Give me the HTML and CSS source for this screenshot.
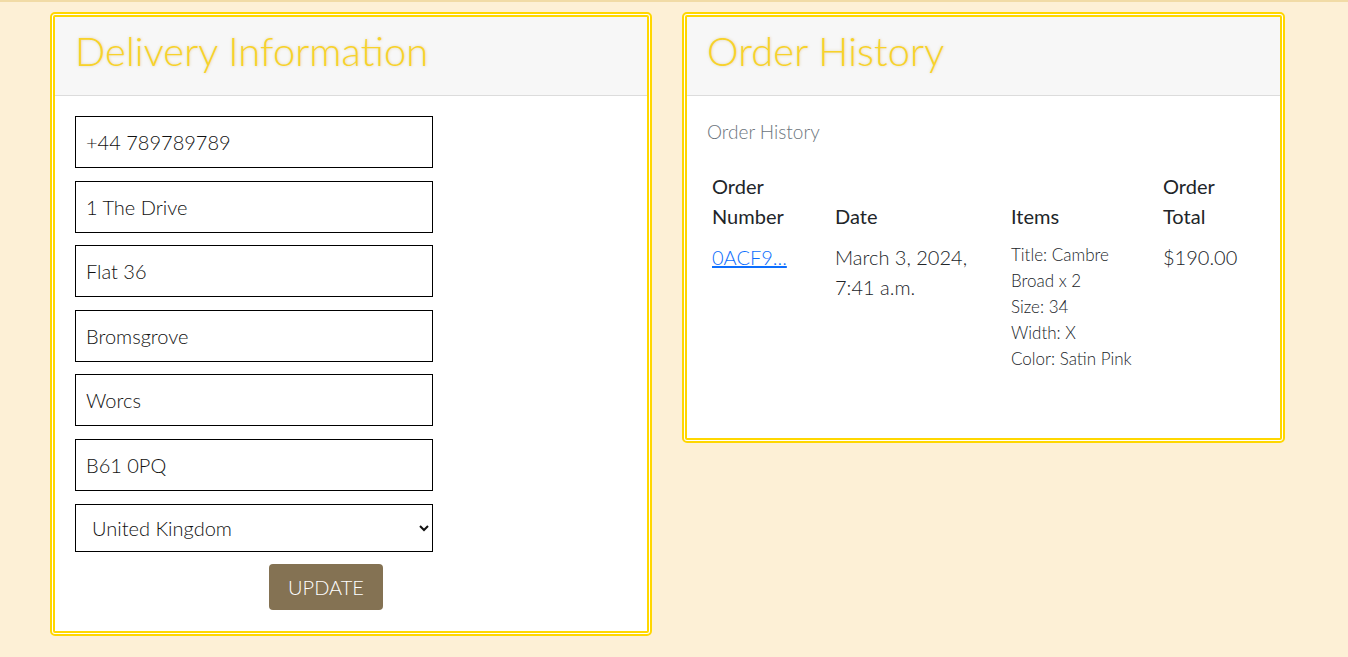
FILE: index.html
```html
<!DOCTYPE html>
<html lang="en">
<head>
<meta charset="utf-8">
<title>Profile</title>
<link rel="stylesheet" href="styles.css">
</head>
<body>
<div class="topbar"></div>
<main class="page">
  <section class="card card-left">
    <header class="card-header"><h2 class="card-title">Delivery Information</h2></header>
    <div class="card-body">
      <form class="form">
        <input class="field" type="text" value="+44 789789789">
        <input class="field" type="text" value="1 The Drive">
        <input class="field" type="text" value="Flat 36">
        <input class="field" type="text" value="Bromsgrove">
        <input class="field" type="text" value="Worcs">
        <input class="field" type="text" value="B61 0PQ">
        <select class="field select">
          <option>United Kingdom</option>
        </select>
        <div class="btn-row"><button type="button" class="btn">UPDATE</button></div>
      </form>
    </div>
  </section>
  <section class="card card-right">
    <header class="card-header"><h2 class="card-title">Order History</h2></header>
    <div class="card-body">
      <p class="muted">Order History</p>
      <table class="orders">
        <thead>
          <tr>
            <th class="c1">Order Number</th>
            <th class="c2">Date</th>
            <th class="c3">Items</th>
            <th class="c4">Order Total</th>
          </tr>
        </thead>
        <tbody>
          <tr>
            <td><a href="#" class="link">0ACF9...</a></td>
            <td>March 3, 2024, 7:41 a.m.</td>
            <td class="items">
              <div>Title: Cambre Broad x 2</div>
              <div>Size: 34</div>
              <div>Width: X</div>
              <div>Color: Satin Pink</div>
            </td>
            <td>$190.00</td>
          </tr>
        </tbody>
      </table>
    </div>
  </section>
</main>
</body>
</html>
```
FILE: styles.css
```css
html, body {
  margin: 0;
  padding: 0;
}
body {
  background: #fdf0d6;
  font-family: "Lato Light", Lato, "Open Sans", sans-serif;
  font-weight: 300;
  color: #212529;
  height: 657px;
  overflow: hidden;
}
.topbar {
  height: 2px;
  background: #f1dba6;
}
.page {
  display: flex;
  align-items: flex-start;
  gap: 30px;
  padding: 10px 0 0 50px;
}
.card {
  background: #fff;
  border: 5px double #ffd700;
  border-radius: 5px;
  box-sizing: border-box;
}
.card-left { width: 602px; }
.card-right { width: 603px; }
.card-header {
  background: #f7f7f7;
  border-bottom: 1px solid #dcdcdc;
  height: 79px;
  box-sizing: border-box;
  padding: 0 20px;
  display: flex;
  align-items: center;
}
.card-title {
  margin: 0;
  font-family: "Lato Light", Lato, sans-serif;
  font-size: 40px;
  font-weight: 300;
  color: #f8d22a;
  text-shadow: 0 0 3px rgba(180, 140, 0, 0.3);
  line-height: 1;
  padding-bottom: 10px;
}
.card-body {
  padding: 20px 20px 21px 20px;
}
.form {
  width: 502px;
  display: flex;
  flex-direction: column;
  gap: 12.6px;
}
.field {
  width: 358px;
  height: 52px;
  box-sizing: border-box;
  border: 1px solid #000;
  border-radius: 0;
  padding: 0 10px;
  font-family: "Lato Light", Lato, sans-serif;
  font-weight: 300;
  font-size: 20px;
  color: #111;
  background: #fff;
  outline: none;
}
.select {
  height: 48px;
  padding-left: 12px;
  padding-right: 8px;
}
.btn-row {
  display: flex;
  justify-content: center;
}
.btn {
  width: 114px;
  height: 46px;
  background: #847253;
  color: #ffffff;
  border: none;
  border-radius: 4px;
  font-family: "Lato Light", Lato, sans-serif;
  font-weight: 300;
  font-size: 20px;
}
.muted {
  margin: 4px 0 27px 0;
  color: #6c757d;
  font-size: 19px;
  font-weight: 300;
  line-height: 24px;
}
.orders {
  border-collapse: collapse;
  width: 552px;
  margin-bottom: 45px;
}
.orders th {
  text-align: left;
  vertical-align: bottom;
  font-family: Lato, sans-serif;
  font-weight: 400;
  font-size: 20px;
  line-height: 30px;
  color: #212529;
  padding: 0 5px 11px 5px;
}
.orders td {
  vertical-align: top;
  font-size: 20px;
  line-height: 30px;
  padding: 0 5px;
  color: #212529;
}
.c1 { width: 113px; }
.c2 { width: 166px; }
.c3 { width: 142px; }
.c4 { width: 91px; }
.link {
  color: #0d6efd;
  text-decoration: underline;
}
.orders td.items {
  font-size: 17px;
  line-height: 26px;
  padding-top: 0;
}
```
